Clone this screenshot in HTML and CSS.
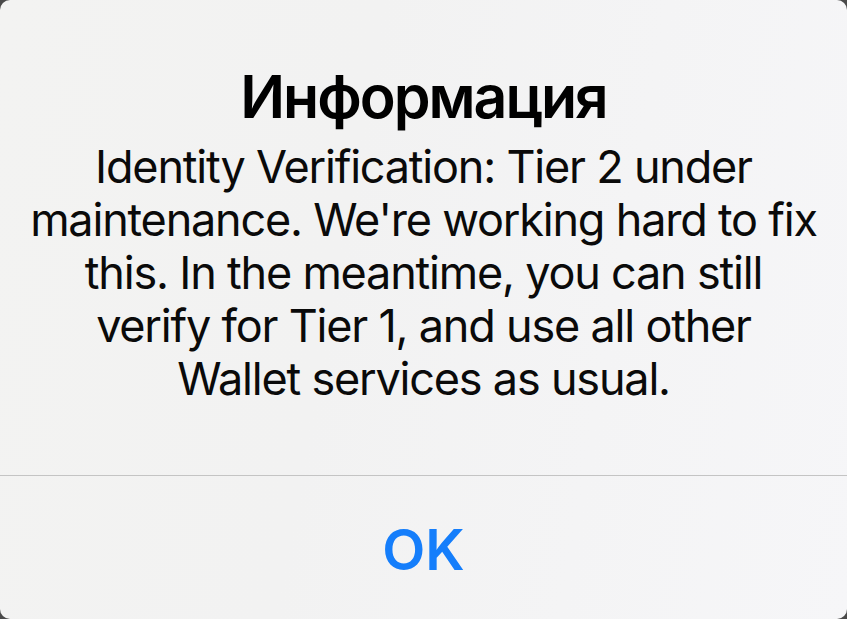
FILE: index.html
```html
<!DOCTYPE html>
<html lang="ru">
<head>
<meta charset="utf-8">
<title>Информация</title>
<link rel="stylesheet" href="styles.css">
</head>
<body>
<div class="alert">
  <div class="alert-content">
    <h1 class="alert-title">Информация</h1>
    <p class="alert-message">Identity Verification: Tier 2 under<br>maintenance. We're working hard to fix<br>this. In the meantime, you can still<br>verify for Tier 1, and use all other<br>Wallet services as usual.</p>
  </div>
  <div class="alert-actions">
    <button class="alert-button" type="button">OK</button>
  </div>
</div>
</body>
</html>
```
FILE: styles.css
```css
html, body {
  margin: 0;
  padding: 0;
  height: 100%;
}
body {
  background: #4a4a4a;
  overflow: hidden;
}
.alert {
  width: 847px;
  height: 619px;
  border-radius: 10px;
  overflow: hidden;
  display: flex;
  flex-direction: column;
  background: linear-gradient(100deg, #f3f3f2 0%, #f2f2f2 40%, #f4f4f5 70%, #f6f6f8 100%);
  font-family: Inter, "Noto Sans", sans-serif;
  color: #000;
}
.alert-content {
  padding: 61px 10px 0;
  height: 476px;
  box-sizing: border-box;
  border-bottom: 1px solid #c4c4c4;
  text-align: center;
  flex: none;
}
.alert-title {
  margin: 0;
  font-size: 59px;
  line-height: 72px;
  font-weight: 600;
  letter-spacing: -2px;
}
.alert-message {
  margin: 7px 0 0;
  font-size: 45px;
  line-height: 53px;
  font-weight: 400;
  letter-spacing: -1.2px;
  white-space: nowrap;
  color: #0a0a0a;
}
.alert-actions {
  flex: 1;
  display: flex;
  align-items: center;
  justify-content: center;
}
.alert-button {
  border: 0;
  background: none;
  padding: 4px 0 0;
  font-family: Inter, "Noto Sans", sans-serif;
  font-size: 56px;
  font-weight: 600;
  color: #157efb;
  cursor: pointer;
}
```
